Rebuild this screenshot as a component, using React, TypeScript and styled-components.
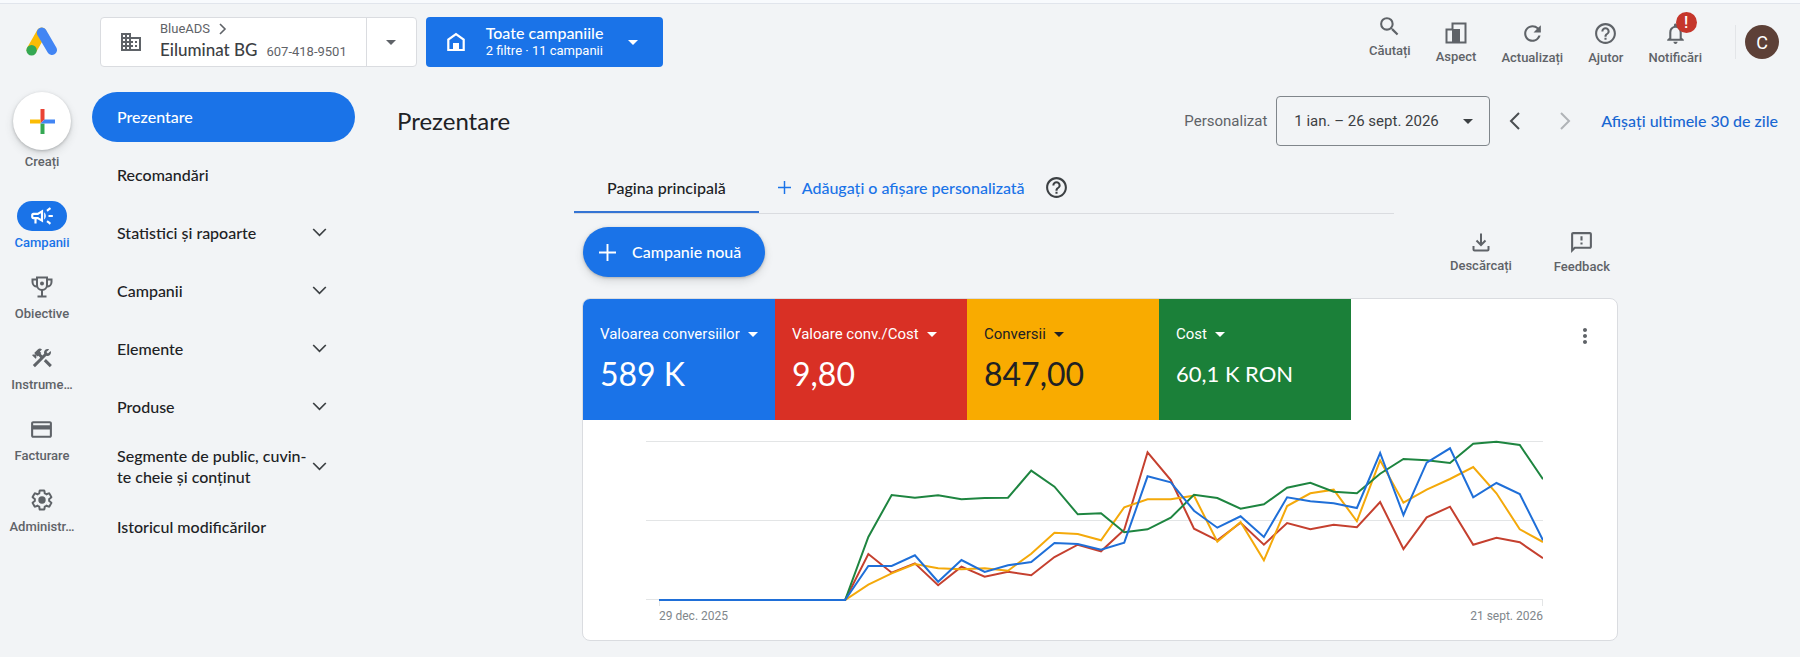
import React from 'react';
import styled, { createGlobalStyle, css } from 'styled-components';
import {
  MdArrowDropDown,
  MdConstruction,
  MdDomain,
  MdHelpOutline,
  MdMoreVert,
  MdNotificationsNone,
  MdOutlineCampaign,
  MdOutlineCreditCard,
  MdOutlineFeedback,
  MdRefresh,
  MdSearch,
} from 'react-icons/md';

const display = `Lato, "Liberation Sans", sans-serif`;
const body = `Roboto, "Liberation Sans", sans-serif`;

const c = {
  page: '#f2f4f6',
  blue: '#1a73e8',
  link: '#1967d2',
  red: '#d93025',
  yellow: '#f9ab00',
  green: '#1b8039',
  ink: '#202124',
  grey: '#5f6368',
  line: '#dadce0',
};

const Global = createGlobalStyle`
  *, *::before, *::after { box-sizing: border-box; }
  body { margin: 0; background: ${c.page}; color: ${c.ink}; font-family: ${body}; }
  button, select { font: inherit; color: inherit; background: none; border: 0; margin: 0; padding: 0; cursor: pointer; }
  a { text-decoration: none; }
  svg { display: block; flex: none; }
  h1, ul, p { margin: 0; padding: 0; list-style: none; font-weight: 400; }
`;

/* ---------- header ---------- */

const TopStrip = styled.div`
  height: 4px;
  background: #f8fafd;
  border-bottom: 1px solid #e1e5ec;
`;

const Header = styled.header`
  display: flex;
  align-items: center;
  height: 76px;
  padding-right: 21px;
`;

const LogoLink = styled.a`
  display: flex;
  justify-content: center;
  width: 84px;
`;

const AccountBox = styled.div`
  display: flex;
  height: 50px;
  margin-left: 16px;
  background: #fff;
  border: 1px solid ${c.line};
  border-radius: 4px;
`;

const AccountButton = styled.button`
  display: flex;
  align-items: center;
  gap: 17px;
  padding: 0 19px 0 18px;
  color: ${c.grey};
  text-align: left;
`;

const AccountMenu = styled.button`
  display: flex;
  align-items: center;
  justify-content: center;
  width: 50px;
  border-left: 1px solid ${c.line};
  color: ${c.grey};
`;

const Lines = styled.span`
  display: flex;
  flex-direction: column;
  white-space: nowrap;
`;

const ParentAccount = styled.span`
  display: flex;
  align-items: center;
  gap: 9px;
  font-size: 13px;
  line-height: 18px;
`;

const AccountName = styled.span`
  display: flex;
  align-items: baseline;
  gap: 9px;
  line-height: 24px;
  font-size: 13px;

  strong {
    font: 500 17px/24px ${display};
    color: #3c4043;
  }
`;

const CampaignPicker = styled.button`
  display: flex;
  align-items: center;
  gap: 18px;
  height: 50px;
  margin-left: 9px;
  padding: 0 18px;
  border-radius: 4px;
  background: ${c.blue};
  color: #fff;
  text-align: left;
`;

const PickerTitle = styled.span`
  font: 500 16px/18px ${display};
`;

const PickerNote = styled.span`
  font-size: 13px;
  line-height: 18px;
`;

const Tools = styled.div`
  display: flex;
  align-items: center;
  gap: 25px;
  margin-left: auto;
  padding-top: 2px;
`;

const ToolButton = styled.button<{ $raised?: boolean }>`
  display: flex;
  flex-direction: column;
  align-items: center;
  gap: 4px;
  margin-bottom: ${(p) => (p.$raised ? '14px' : '0')};
  color: ${c.grey};
  font-size: 13px;
  font-weight: 500;
  line-height: 16px;
  white-space: nowrap;
`;

const BadgeAnchor = styled.span`
  position: relative;
`;

const Badge = styled.span`
  position: absolute;
  top: -9px;
  left: 13px;
  width: 21px;
  height: 21px;
  border-radius: 50%;
  background: #c5362b;
  color: #fff;
  font-size: 16px;
  line-height: 21px;
  text-align: center;
`;

const Profile = styled.div`
  display: flex;
  align-items: center;
  height: 34px;
  margin-left: 33px;
  padding-left: 9px;
  border-left: 1px solid #e3e5e8;
`;

const Avatar = styled.button`
  width: 34px;
  height: 34px;
  border-radius: 50%;
  background: #5d4037;
  color: #fff;
  font-size: 18px;
`;

/* ---------- left side ---------- */

const Body = styled.div`
  display: flex;
  align-items: flex-start;
  padding: 12px 0 14px;
`;

const Rail = styled.nav`
  display: flex;
  flex-direction: column;
  align-items: center;
  gap: 21px;
  flex: none;
  width: 84px;
`;

const railEntry = css`
  display: flex;
  flex-direction: column;
  align-items: center;
  gap: 4px;
  font-size: 13px;
  font-weight: 500;
  line-height: 16px;
`;

const CreateButton = styled.button`
  ${railEntry}
  margin-bottom: 10px;
  color: ${c.grey};
`;

const CreateDisc = styled.span`
  display: flex;
  align-items: center;
  justify-content: center;
  width: 58px;
  height: 58px;
  border-radius: 50%;
  background: #fff;
  box-shadow: 0 1px 3px rgba(60, 64, 67, 0.3), 0 4px 8px rgba(60, 64, 67, 0.15);
`;

const RailLink = styled.a<{ $active?: boolean }>`
  ${railEntry}
  color: ${(p) => (p.$active ? c.blue : c.grey)};
`;

const RailIcon = styled.span<{ $active?: boolean }>`
  display: flex;
  align-items: center;
  justify-content: center;
  width: 50px;
  height: 30px;
  border-radius: 15px;
  background: ${(p) => (p.$active ? c.blue : 'transparent')};
  color: ${(p) => (p.$active ? '#fff' : c.grey)};
`;

const Nav = styled.nav`
  flex: none;
  width: 263px;
  margin-left: 8px;
`;

const NavList = styled.ul`
  display: flex;
  flex-direction: column;
  gap: 8px;
`;

const NavLink = styled.a<{ $active?: boolean }>`
  display: flex;
  align-items: center;
  min-height: 50px;
  padding: 5px 28px 7px 25px;
  border-radius: 25px;
  background: ${(p) => (p.$active ? c.blue : 'transparent')};
  color: ${(p) => (p.$active ? '#fff' : c.ink)};
  font: 500 16px/21px ${display};

  span {
    flex: 1;
  }
`;

/* ---------- main area ---------- */

const Main = styled.main`
  flex: 1;
  min-width: 0;
`;

const PageHeader = styled.div`
  display: flex;
  align-items: center;
  padding: 4px 22px 0 42px;
`;

const PageTitle = styled.h1`
  margin-right: auto;
  font: 400 24px/32px ${display};
`;

const RangeName = styled.span`
  margin-right: 9px;
  color: ${c.grey};
  font-size: 15px;
`;

const DateButton = styled.button`
  display: flex;
  align-items: center;
  justify-content: space-between;
  width: 214px;
  height: 50px;
  padding: 0 9px 0 17px;
  border: 1px solid #80868b;
  border-radius: 4px;
  color: #3c4043;
  font-size: 15px;
`;

const StepButtons = styled.div`
  display: flex;
  gap: 26px;
  margin: 0 24px 0 13px;
`;

const StepButton = styled.button`
  color: #4a4d51;

  &:disabled {
    color: #b0b3b7;
  }
`;

const RangeLink = styled.a`
  color: ${c.link};
  font: 500 16px/20px ${display};
  white-space: nowrap;
`;

const ContentArea = styled.div`
  padding-left: 45px;
`;

const Content = styled.div`
  max-width: 1052px;
  margin: 16px auto 0;
`;

const Tabs = styled.div`
  display: flex;
  align-items: center;
  max-width: 820px;
  height: 52px;
  border-bottom: 1px solid ${c.line};
  font: 500 16px/20px ${display};
  white-space: nowrap;
`;

const Tab = styled.button`
  align-self: stretch;
  padding: 2px 33px 0;
  border-bottom: 2px solid #3474d4;
`;

const AddView = styled.button`
  display: flex;
  align-items: center;
  gap: 11px;
  margin: 0 19px;
  color: ${c.blue};
`;

const HelpButton = styled.button`
  color: #3c4043;
`;

const Actions = styled.div`
  display: flex;
  align-items: center;
  gap: 42px;
  margin-top: 13px;
  padding: 0 16px 0 9px;
`;

const NewCampaign = styled.button`
  display: flex;
  align-items: center;
  gap: 16px;
  height: 50px;
  margin-right: auto;
  padding: 0 24px 0 16px;
  border-radius: 25px;
  background: ${c.blue};
  color: #fff;
  font: 500 16px/20px ${display};
  box-shadow: 0 1px 3px rgba(60, 64, 67, 0.3), 0 4px 8px rgba(60, 64, 67, 0.15);
`;

const Card = styled.section`
  margin: 21px 8px 0;
  overflow: hidden;
  background: #fff;
  border: 1px solid ${c.line};
  border-radius: 8px;
`;

const CardTop = styled.div`
  display: flex;
  justify-content: space-between;
  align-items: flex-start;
`;

const Tiles = styled.div`
  display: grid;
  grid-template-columns: repeat(4, 192px);
`;

const Tile = styled.div<{ $bg: string; $fg: string }>`
  height: 121px;
  padding: 23px 0 0 17px;
  background: ${(p) => p.$bg};
  color: ${(p) => p.$fg};
`;

const MetricPicker = styled.label`
  display: inline-grid;
  align-items: center;

  > * {
    grid-area: 1 / 1;
  }

  svg {
    justify-self: end;
    pointer-events: none;
  }
`;

const MetricSelect = styled.select`
  appearance: none;
  field-sizing: content;
  height: 20px;
  padding-right: 25px;
  font-size: 15px;
  line-height: 20px;

  option {
    color: ${c.ink};
  }
`;

const TileValue = styled.p<{ $small?: boolean }>`
  margin-top: 8px;
  font-family: ${display};
  font-size: ${(p) => (p.$small ? '22px' : '32px')};
  line-height: 40px;
  white-space: nowrap;
`;

const MoreButton = styled.button`
  margin: 25px 20px 0 0;
  color: ${c.grey};
`;

const ChartBox = styled.div`
  padding: 20px 74px 15px 63px;

  svg {
    width: 100%;
    height: 168px;
  }
`;

const ChartDates = styled.div`
  display: flex;
  justify-content: space-between;
  padding: 0 0 1px 13px;
  color: #80868b;
  font-size: 12px;
  line-height: 16px;
`;

/* ---------- drawings ---------- */

const AdsLogo = () => (
  <svg width="32" height="30" viewBox="0 0 32 30" aria-hidden="true">
    <path d="M15.6 5.6 5.6 23" stroke="#fbbc04" strokeWidth="10" strokeLinecap="round" />
    <path d="M15.8 5.6 26 23" stroke="#4285f4" strokeWidth="10" strokeLinecap="round" />
    <circle cx="5.6" cy="23.2" r="5.2" fill="#34a853" />
  </svg>
);

const HomeIcon = () => (
  <svg width="24" height="24" viewBox="0 0 24 24" aria-hidden="true">
    <path d="M4.3 20V9.6L12 4l7.7 5.6V20z" fill="none" stroke="currentColor" strokeWidth="2.2" />
    <path d="M9 13h6v7H9z" fill="currentColor" />
  </svg>
);

const AspectIcon = () => (
  <svg width="24" height="24" viewBox="0 0 24 24" aria-hidden="true">
    <path d="M8.5 8.5v-6h13v19h-19v-13h6" fill="none" stroke="currentColor" strokeWidth="2" />
    <path d="M8 8h8v14H8z" fill="currentColor" />
  </svg>
);

const TrophyIcon = () => (
  <svg width="24" height="24" viewBox="0 0 24 24" fill="none" stroke="currentColor" strokeWidth="2" aria-hidden="true">
    <path d="M7 2.5h10V10a5 5 0 0 1-10 0z" />
    <path d="M7 4.5H2.500V7A4.500 4.500 0 0 0 7 11.500M17 4.500h4.500V7a4.500 4.500 0 0 1-4.500 4.500M12 15v6M7.500 21.500h9" />
    <circle cx="12" cy="8.5" r="2" fill="currentColor" stroke="none" />
  </svg>
);

const GearIcon = () => (
  <svg width="24" height="24" viewBox="0 0 24 24" aria-hidden="true">
    <path
      d="M19.140 12.940c.04-.3.06-.61.06-.94 0-.32-.02-.64-.07-.94l2.030-1.580c.18-.14.23-.41.12-.61l-1.920-3.320c-.12-.22-.37-.29-.59-.22l-2.390.96c-.5-.38-1.030-.7-1.620-.94l-.36-2.540c-.04-.24-.24-.41-.48-.41h-3.840c-.24 0-.43.17-.47.41l-.36 2.540c-.59.24-1.130.57-1.620.94l-2.390-.96c-.22-.08-.47 0-.59.22L2.740 8.870c-.12.21-.08.47.12.61l2.030 1.580c-.05.3-.09.63-.09.94s.02.64.07.94l-2.030 1.580c-.18.14-.23.41-.12.61l1.920 3.320c.12.22.37.29.59.22l2.390-.96c.5.38 1.030.7 1.620.94l.36 2.540c.05.24.24.41.48.41h3.840c.24 0 .44-.17.47-.41l.36-2.540c.59-.24 1.130-.56 1.620-.94l2.390.96c.22.08.47 0 .59-.22l1.920-3.320c.12-.22.07-.47-.12-.61z"
      fill="none"
      stroke="currentColor"
      strokeWidth="2"
    />
    <circle cx="12" cy="12" r="3.7" fill="currentColor" />
  </svg>
);

const DownloadIcon = () => (
  <svg width="24" height="24" viewBox="0 0 24 24" fill="none" stroke="currentColor" strokeWidth="2" aria-hidden="true">
    <path d="M12 3.500V15M7.500 10.500 12 15l4.500-4.500M4.500 16v3.500a1 1 0 0 0 1 1h13a1 1 0 0 0 1-1V16" />
  </svg>
);

const Chevron = ({ d }: { d: string }) => (
  <svg width="24" height="24" viewBox="0 0 24 24" fill="none" stroke="currentColor" strokeWidth="2" aria-hidden="true">
    <path d={d} />
  </svg>
);

const NavChevron = () => (
  <svg width="15" height="10" viewBox="0 0 15 10" fill="none" stroke="#3c4043" strokeWidth="1.7" aria-hidden="true">
    <path d="M1.200 2 7.500 8.300 13.800 2" />
  </svg>
);

const Plus = ({ size }: { size: number }) => (
  <svg width={size} height={size} viewBox="0 0 16 16" stroke="currentColor" strokeWidth="1.800" aria-hidden="true">
    <path d="M8 0v16M0 8h16" />
  </svg>
);

const ColourPlus = () => (
  <svg width="25" height="25" viewBox="0 0 25 25" aria-hidden="true">
    <path d="M10.500 0h4v10.500l-4 4z" fill="#ea4335" />
    <path d="M0 10.500h10.500v4H0z" fill="#fbbc04" />
    <path d="M10.500 14.500h4V25h-4z" fill="#34a853" />
    <path d="M14.500 10.500H25v4H10.500z" fill="#4285f4" />
  </svg>
);

/* ---------- data ---------- */

const railItems = [
  { label: 'Campanii', name: 'Campanii', icon: <MdOutlineCampaign size={26} />, active: true },
  { label: 'Obiective', name: 'Obiective', icon: <TrophyIcon /> },
  { label: 'Instrume…', name: 'Instrumente', icon: <MdConstruction size={24} /> },
  { label: 'Facturare', name: 'Facturare', icon: <MdOutlineCreditCard size={25} /> },
  { label: 'Administr…', name: 'Administrator', icon: <GearIcon /> },
];

const navItems = [
  { label: 'Prezentare', active: true },
  { label: 'Recomandări' },
  { label: 'Statistici și rapoarte', opens: true },
  { label: 'Campanii', opens: true },
  { label: 'Elemente', opens: true },
  { label: 'Produse', opens: true },
  { label: 'Segmente de public, cuvin\u00ADte cheie și conținut', opens: true },
  { label: 'Istoricul modificărilor' },
];

const metrics = [
  { name: 'Valoarea conversiilor', value: '589 K', bg: c.blue, fg: '#fff' },
  { name: 'Valoare conv./Cost', value: '9,80', bg: c.red, fg: '#fff' },
  { name: 'Conversii', value: '847,00', bg: c.yellow, fg: c.ink },
  { name: 'Cost', value: '60,1 K RON', bg: c.green, fg: '#fff', small: true },
];

// Weekly values from 0 to 476; the first nine weeks have no data.
const quietWeeks = Array<number>(9).fill(0);
const series = [
  {
    colour: '#c5402f',
    values: [138, 82, 110, 44, 100, 70, 85, 74, 129, 166, 146, 211, 443, 360, 214, 179, 232, 166, 231, 212, 226, 218, 294, 153, 248, 280, 166, 187, 173, 125],
  },
  {
    colour: '#f4a90a',
    values: [46, 80, 108, 95, 92, 95, 88, 139, 202, 198, 179, 278, 302, 302, 313, 175, 234, 119, 282, 320, 331, 236, 419, 292, 331, 363, 399, 320, 212, 174],
  },
  {
    colour: '#1e8540',
    values: [189, 315, 307, 314, 302, 306, 307, 388, 340, 257, 260, 203, 212, 247, 316, 306, 274, 287, 337, 352, 325, 320, 379, 423, 419, 411, 469, 475, 465, 362],
  },
  {
    colour: '#1f6fd8',
    values: [102, 102, 134, 55, 120, 84, 104, 114, 171, 168, 151, 172, 371, 353, 268, 217, 251, 189, 308, 296, 290, 276, 441, 255, 412, 455, 308, 351, 318, 179],
  },
];

const linePoints = (values: number[]) =>
  [...quietWeeks, ...values]
    .map((v, i) => `${(13 + (i * 883) / 38).toFixed(1)},${(160 - v / 3).toFixed(1)}`)
    .join(' ');

const Chart = () => (
  <svg viewBox="0 0 896 168" preserveAspectRatio="none" role="img" aria-label="Evoluția valorilor">
    <path
      d="M0 1.500h896M0 80.500h896M0 159.500h896M13.500 160v6M895.500 160v6"
      stroke="#e3e5e6"
      vectorEffect="non-scaling-stroke"
    />
    {series.map((s) => (
      <polyline
        key={s.colour}
        points={linePoints(s.values)}
        fill="none"
        stroke={s.colour}
        strokeWidth="2"
        vectorEffect="non-scaling-stroke"
      />
    ))}
  </svg>
);

export default function App() {
  return (
    <>
      <Global />
      <TopStrip />
      <Header>
        <LogoLink href="#" aria-label="Google Ads">
          <AdsLogo />
        </LogoLink>
        <AccountBox>
          <AccountButton>
            <MdDomain size={24} />
            <Lines>
              <ParentAccount>
                BlueADS
                <svg width="8" height="12" viewBox="0 0 8 12" fill="none" stroke="currentColor" strokeWidth="1.600" aria-hidden="true">
                  <path d="M1 1l5 5-5 5" />
                </svg>
              </ParentAccount>
              <AccountName>
                <strong>Eiluminat BG</strong>607-418-9501
              </AccountName>
            </Lines>
          </AccountButton>
          <AccountMenu aria-label="Schimbați contul">
            <MdArrowDropDown size={24} />
          </AccountMenu>
        </AccountBox>
        <CampaignPicker>
          <HomeIcon />
          <Lines>
            <PickerTitle>Toate campaniile</PickerTitle>
            <PickerNote>2 filtre · 11 campanii</PickerNote>
          </Lines>
          <MdArrowDropDown size={24} />
        </CampaignPicker>
        <Tools>
          <ToolButton $raised>
            <MdSearch size={25} />
            Căutați
          </ToolButton>
          <ToolButton>
            <AspectIcon />
            Aspect
          </ToolButton>
          <ToolButton>
            <MdRefresh size={25} />
            Actualizați
          </ToolButton>
          <ToolButton>
            <MdHelpOutline size={25} />
            Ajutor
          </ToolButton>
          <ToolButton>
            <BadgeAnchor>
              <MdNotificationsNone size={25} />
              <Badge>!</Badge>
            </BadgeAnchor>
            Notificări
          </ToolButton>
        </Tools>
        <Profile>
          <Avatar>C</Avatar>
        </Profile>
      </Header>

      <Body>
        <Rail>
          <CreateButton>
            <CreateDisc>
              <ColourPlus />
            </CreateDisc>
            Creați
          </CreateButton>
          {railItems.map((item) => (
            <RailLink key={item.name} href="#" title={item.name} $active={item.active}>
              <RailIcon $active={item.active}>{item.icon}</RailIcon>
              {item.label}
            </RailLink>
          ))}
        </Rail>

        <Nav>
          <NavList>
            {navItems.map((item) => (
              <li key={item.label}>
                <NavLink href="#" $active={item.active}>
                  <span>{item.label}</span>
                  {item.opens && <NavChevron />}
                </NavLink>
              </li>
            ))}
          </NavList>
        </Nav>

        <Main>
          <PageHeader>
            <PageTitle>Prezentare</PageTitle>
            <RangeName>Personalizat</RangeName>
            <DateButton>
              1 ian. – 26 sept. 2026
              <MdArrowDropDown size={24} />
            </DateButton>
            <StepButtons>
              <StepButton aria-label="Perioada anterioară">
                <Chevron d="M16 4l-8 8 8 8" />
              </StepButton>
              <StepButton aria-label="Perioada următoare" disabled>
                <Chevron d="M8 4l8 8-8 8" />
              </StepButton>
            </StepButtons>
            <RangeLink href="#">Afișați ultimele 30 de zile</RangeLink>
          </PageHeader>

          <ContentArea>
            <Content>
              <Tabs>
                <Tab>Pagina principală</Tab>
                <AddView>
                  <Plus size={13} />
                  Adăugați o afișare personalizată
                </AddView>
                <HelpButton aria-label="Ajutor">
                  <MdHelpOutline size={25} />
                </HelpButton>
              </Tabs>

              <Actions>
                <NewCampaign>
                  <Plus size={17} />
                  Campanie nouă
                </NewCampaign>
                <ToolButton>
                  <DownloadIcon />
                  Descărcați
                </ToolButton>
                <ToolButton>
                  <MdOutlineFeedback size={25} />
                  Feedback
                </ToolButton>
              </Actions>

              <Card>
                <CardTop>
                  <Tiles>
                    {metrics.map((m) => (
                      <Tile key={m.name} $bg={m.bg} $fg={m.fg}>
                        <MetricPicker>
                          <MetricSelect defaultValue={m.name} aria-label="Valoare afișată">
                            {metrics.map((o) => (
                              <option key={o.name}>{o.name}</option>
                            ))}
                          </MetricSelect>
                          <MdArrowDropDown size={24} />
                        </MetricPicker>
                        <TileValue $small={m.small}>{m.value}</TileValue>
                      </Tile>
                    ))}
                  </Tiles>
                  <MoreButton aria-label="Mai multe">
                    <MdMoreVert size={24} />
                  </MoreButton>
                </CardTop>
                <ChartBox>
                  <Chart />
                  <ChartDates>
                    <span>29 dec. 2025</span>
                    <span>21 sept. 2026</span>
                  </ChartDates>
                </ChartBox>
              </Card>
            </Content>
          </ContentArea>
        </Main>
      </Body>
    </>
  );
}
